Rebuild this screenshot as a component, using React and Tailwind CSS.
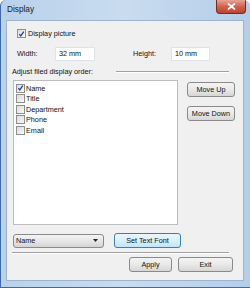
const font = { fontFamily: '"Liberation Sans", Arial, sans-serif' };

function Check({ checked }) {
  return (
    <span className="inline-flex w-[9px] h-[9px] border border-[#8e8f8f] bg-gradient-to-br from-[#dcdcdc] to-[#f8f8f8] items-center justify-center shrink-0">
      {checked && (
        <svg width="8" height="8" viewBox="0 0 8 8">
          <path d="M1.5 4.2 L3.2 6.2 L6.6 1.2" fill="none" stroke="#1c3f94" strokeWidth="1.4" />
        </svg>
      )}
    </span>
  );
}

function Btn({ children, className = "", primary }) {
  return (
    <div
      className={
        "flex items-center justify-center h-[15px] rounded-[3px] border text-[7.25px] text-[#111] " +
        (primary
          ? "border-[#3c7fb1] bg-gradient-to-b from-[#eaf6fd] via-[#d9f0fc] to-[#bee6fd] "
          : "border-[#8a8a8a] bg-gradient-to-b from-[#f4f4f4] via-[#e9e9e9] to-[#d6d6d6] ") +
        className
      }
    >
      {children}
    </div>
  );
}

export default function App() {
  const items = ["Name", "Title", "Department", "Phone", "Email"];
  return (
    <div
      className="w-[250px] h-[288px] flex flex-col bg-gradient-to-r from-[#b9d1ea] via-[#c9dcf0] to-[#b4cde8] border-l border-b border-[#3f6aa8] rounded-t-[6px] overflow-hidden"
      style={font}
    >
      <div className="h-[20px] flex items-start relative shrink-0">
        <span className="text-[8.25px] text-[#1a1a1a] ml-[6px] mt-[6px] leading-none">Display</span>
        <div className="absolute left-[215px] top-0 w-[30px] h-[14px] rounded-b-[4px] border border-t-0 border-[#7a2a1a] bg-gradient-to-b from-[#e8a493] via-[#d1624c] to-[#c0402a] flex items-center justify-center">
          <svg width="9" height="7" viewBox="0 0 9 7">
            <path d="M1 0.5 L8 6.5 M8 0.5 L1 6.5" stroke="#fff" strokeWidth="1.8" />
          </svg>
        </div>
      </div>
      <div className="flex flex-1 pl-[5px] pr-[6px] pb-[6px]">
        <div className="flex-1 bg-[#f0f0f0] border border-[#9db4cf] flex flex-col text-[7.25px] text-[#111] leading-none">
          <div className="flex items-center gap-[2px] ml-[10px] mt-[8px] h-[9px]">
            <Check checked />
            <span>Display picture</span>
          </div>
          <div className="flex items-center mt-[9px] h-[14px]">
            <span className="ml-[10px] w-[38px]">Width:</span>
            <div className="w-[40px] h-[14px] bg-white border border-[#e2e3ea] flex items-center pl-[3px]">32 mm</div>
            <span className="ml-[38px] w-[38px]">Height:</span>
            <div className="w-[39px] h-[14px] bg-white border border-[#e2e3ea] flex items-center pl-[3px]">10 mm</div>
          </div>
          <div className="flex items-center mt-[6px] h-[9px]">
            <span className="ml-[5px]">Adjust filed display order:</span>
            <div className="ml-[23px] w-[113px] h-[1px] bg-[#a0a0a0] border-b border-white box-content"></div>
          </div>
          <div className="flex mt-[4px]">
            <div className="ml-[6px] w-[165px] h-[145px] bg-white border border-[#bcbcbc] flex flex-col pt-[2px] pl-[2px]">
              {items.map((it, i) => (
                <div key={it} className="flex items-center gap-[1px] h-[10.5px]">
                  <Check checked={i === 0} />
                  <span>{it}</span>
                </div>
              ))}
            </div>
            <div className="ml-[9px] mt-[2px] flex flex-col gap-[9px]">
              <Btn className="w-[48px]">Move Up</Btn>
              <Btn className="w-[48px]">Move Down</Btn>
            </div>
          </div>
          <div className="flex items-center mt-[8px] h-[15px]">
            <div className="ml-[6px] w-[91px] h-[14px] rounded-[3px] border border-[#8a8a8a] bg-gradient-to-b from-[#f4f4f4] via-[#e6e6e6] to-[#d4d4d4] flex items-center justify-between pl-[2px] pr-[5px]">
              <span>Name</span>
              <svg width="5" height="3" viewBox="0 0 5 3">
                <path d="M0 0 H5 L2.5 3 Z" fill="#222" />
              </svg>
            </div>
            <Btn primary className="ml-[10px] w-[67px]">Set Text Font</Btn>
          </div>
          <div className="ml-[5px] mt-[4px] w-[217px] h-[1px] bg-[#a0a0a0] border-b border-white box-content"></div>
          <div className="flex justify-end mt-[3px] mr-[10px] gap-[6px]">
            <Btn className="w-[43px]">Apply</Btn>
            <Btn className="w-[55px]">Exit</Btn>
          </div>
        </div>
      </div>
    </div>
  );
}
